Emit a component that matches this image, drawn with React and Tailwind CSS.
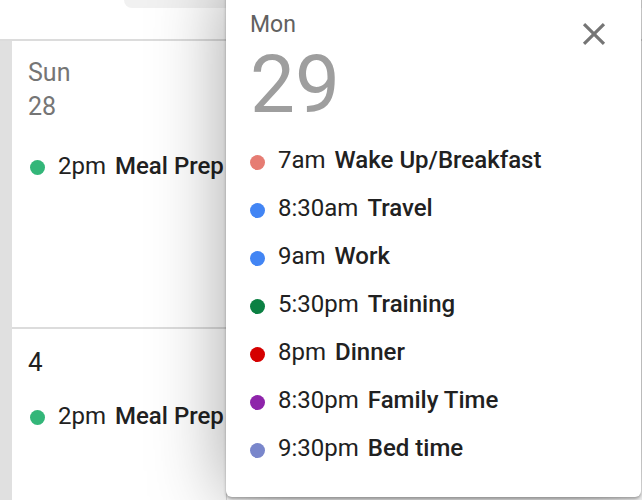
import React from "react";

const events = [
  { time: "7am", title: "Wake Up/Breakfast", color: "bg-[#e67c73]" },
  { time: "8:30am", title: "Travel", color: "bg-[#4285f4]" },
  { time: "9am", title: "Work", color: "bg-[#4285f4]" },
  { time: "5:30pm", title: "Training", color: "bg-[#0b8043]" },
  { time: "8pm", title: "Dinner", color: "bg-[#d50000]" },
  { time: "8:30pm", title: "Family Time", color: "bg-[#8e24aa]" },
  { time: "9:30pm", title: "Bed time", color: "bg-[#7986cb]" },
];

function MealPrep() {
  return (
    <div className="flex items-start ml-[2px]">
      <span className="mt-[6px] w-[15px] h-[15px] rounded-full bg-[#33b679] shrink-0" />
      <span className="ml-[13px] text-[24px] leading-none text-[#212121] whitespace-nowrap">
        2pm<span className="ml-[9px] font-medium">Meal Prep</span>
      </span>
    </div>
  );
}

export default function App() {
  return (
    <div className="relative w-[642px] h-[500px] overflow-hidden bg-white font-['Roboto',sans-serif]">
      {/* header */}
      <div className="h-[41px] border-b-2 border-[#dcdcdc] bg-white">
        <div className="ml-[124px] h-[8px] rounded-bl-[8px] bg-[#f1f1f1]" />
      </div>
      {/* body */}
      <div className="flex h-[459px]">
        <div className="w-[12px] bg-[#e0e0e0] shrink-0" />
        <div className="w-[214px] shrink-0 flex flex-col">
          <div className="h-[288px] pl-[16px] pt-[19px] border-b-2 border-[#dcdcdc]">
            <div className="text-[25px] leading-none text-[#757575]">Sun</div>
            <div className="mt-[9px] text-[25px] leading-none text-[#757575]">28</div>
            <div className="mt-[35px]">
              <MealPrep />
            </div>
          </div>
          <div className="flex-1 pl-[16px] pt-[20px]">
            <div className="text-[26px] leading-none text-[#212121]">4</div>
            <div className="mt-[29px]">
              <MealPrep />
            </div>
          </div>
        </div>
        <div className="flex-1 border-l border-[#dcdcdc]" />
      </div>

      {/* popover */}
      <div className="absolute left-[226px] top-[-20px] w-[415px] h-[517px] bg-white rounded-[6px] shadow-[0_0_76px_rgba(0,0,0,0.37),0_2px_3px_rgba(0,0,0,0.3)] pl-[24px] pt-[33px]">
        <div className="text-[23px] leading-none text-[#616161]">Mon</div>
        <div className="mt-[9px] text-[80px] leading-none text-[#9e9e9e]">29</div>
        <div className="mt-[11px] flex flex-col">
          {events.map((e) => (
            <div key={e.time + e.title} className="h-[48px] flex items-start">
              <span className={`mt-[19px] w-[15px] h-[15px] rounded-full shrink-0 ${e.color}`} />
              <span className="ml-[13px] text-[24px] leading-[48px] text-[#212121] whitespace-nowrap">
                {e.time}
                <span className="ml-[9px] font-medium">{e.title}</span>
              </span>
            </div>
          ))}
        </div>
        <button className="absolute right-[28px] top-[35px] w-[38px] h-[38px] flex items-center justify-center text-[#757575]">
          <svg viewBox="0 0 24 24" width="38" height="38" fill="currentColor">
            <path d="M19 6.41L17.59 5 12 10.59 6.41 5 5 6.41 10.59 12 5 17.59 6.41 19 12 13.41 17.59 19 19 17.59 13.41 12z" />
          </svg>
        </button>
      </div>
    </div>
  );
}
